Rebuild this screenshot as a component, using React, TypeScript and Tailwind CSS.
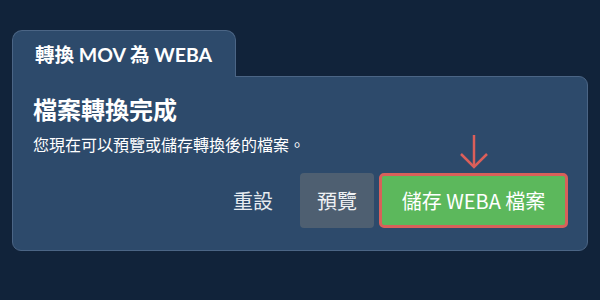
import React from 'react';

const cjk = { fontFamily: '"Noto Sans CJK TC", "Noto Sans", sans-serif' };
const lato = { fontFamily: 'Lato, "Noto Sans CJK TC", sans-serif' };

export default function App() {
  return (
    <div className="w-[600px] h-[300px] bg-[#11233a] pt-[30px] px-[12px]" style={cjk}>
      {/* Tab */}
      <div className="relative z-10 -mb-px w-[224px] h-[47px] bg-[#2d4a6b] border border-b-0 border-[#4b6585] rounded-t-[10px] pl-[22px] pt-[9px]">
        <span className="text-white text-[19.5px] font-bold" style={lato}>
          轉換 MOV 為 WEBA
        </span>
      </div>

      {/* Card */}
      <div className="w-[576px] h-[175px] bg-[#2d4a6b] border border-[#4b6585] rounded-b-[9px] rounded-tr-[9px] pl-[20px] pr-[19px] pt-[17px]">
        <h2 className="text-white text-[24px] font-bold leading-[30px]">檔案轉換完成</h2>
        <p className="text-white text-[16px] leading-[22px] mt-[9px]">您現在可以預覽或儲存轉換後的檔案。</p>

        <div className="flex justify-end items-center mt-[18px] gap-[5px]">
          <button className="text-[#e6ebf0] text-[20px] px-[10px] mr-[12px]">重設</button>
          <button className="w-[74px] h-[55px] bg-[#4e5f71] rounded-[4px] text-[#eef1f4] text-[20px]">預覽</button>
          <div className="relative">
            <svg
              className="absolute left-[80px] -top-[39px]"
              width="30"
              height="36"
              viewBox="0 0 30 36"
              fill="none"
              stroke="#db5f5a"
              strokeWidth="2.5"
            >
              <path d="M15 1 V33" />
              <path d="M2 20 L15 33 L28 20" />
            </svg>
            <button className="w-[189px] h-[55px] bg-[#5cb85c] border-[3px] border-[#d9605a] rounded-[5px] text-white text-[20px]">
              儲存 WEBA 檔案
            </button>
          </div>
        </div>
      </div>
    </div>
  );
}
